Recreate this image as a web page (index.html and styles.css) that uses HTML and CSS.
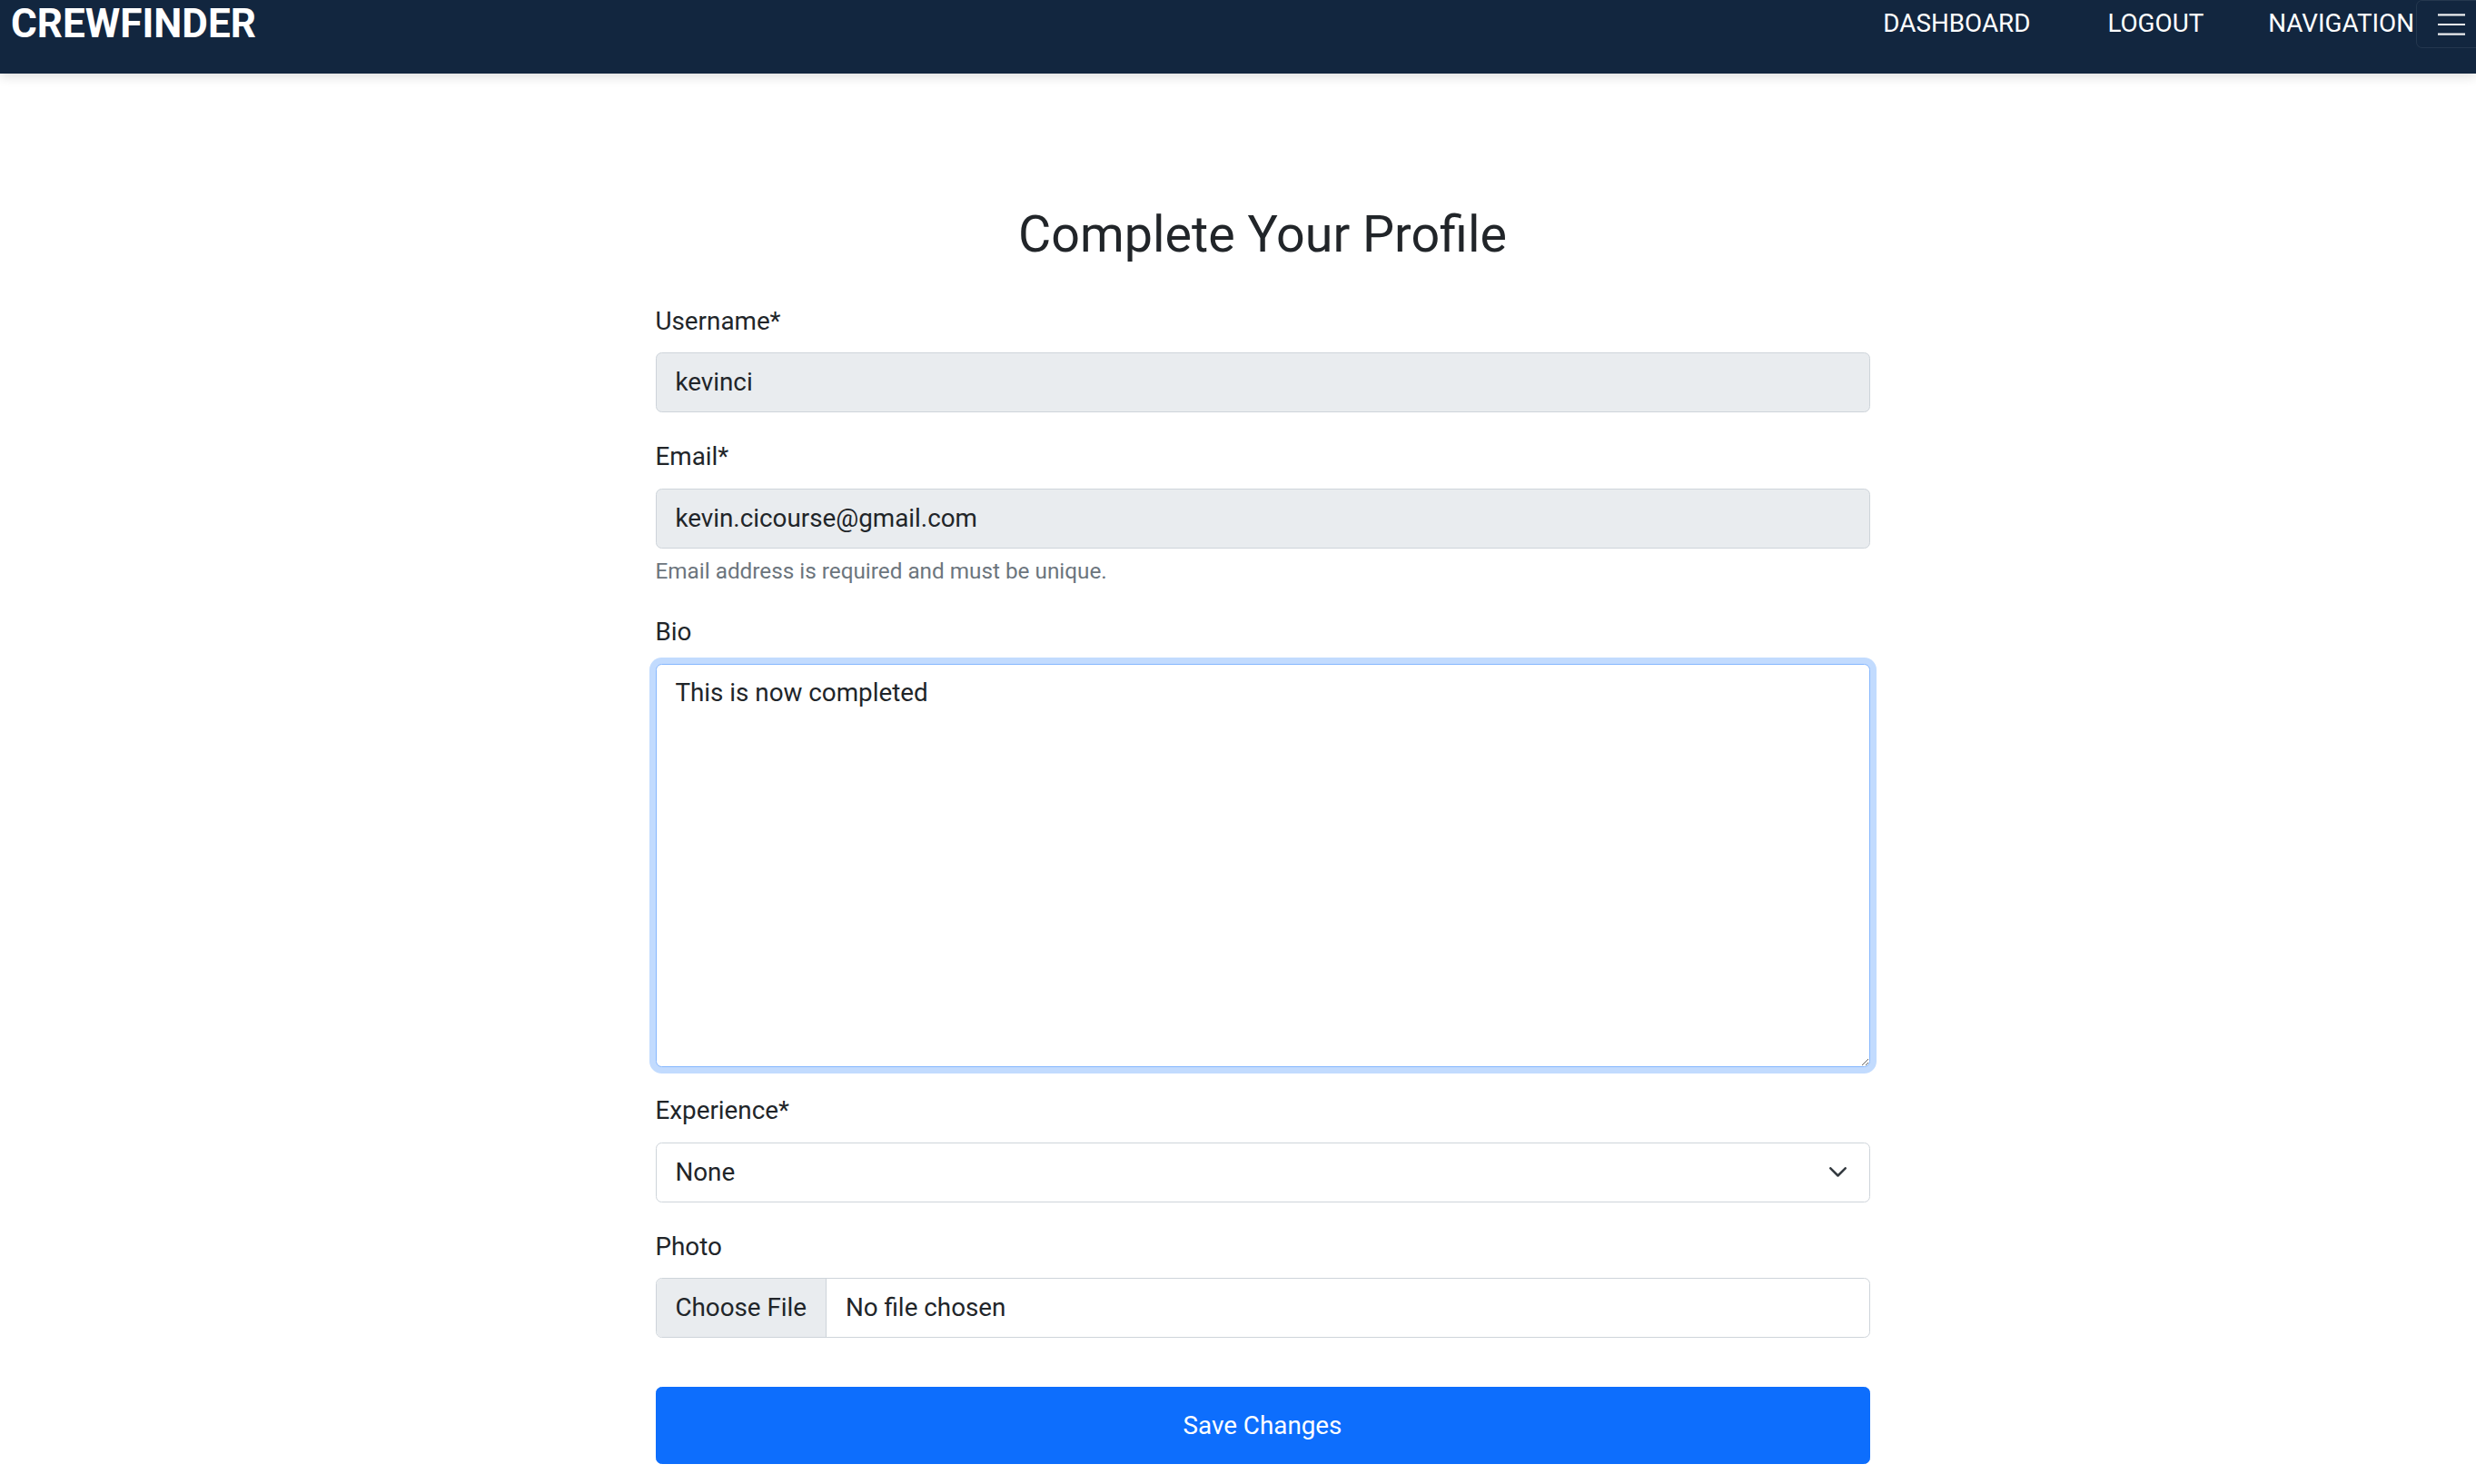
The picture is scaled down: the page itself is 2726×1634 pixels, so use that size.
FILE: index.html
```html
<!DOCTYPE html>
<html lang="en">
<head>
<meta charset="utf-8">
<title>CrewFinder - Complete Your Profile</title>
<link rel="stylesheet" href="styles.css">
</head>
<body>
<header class="navbar">
  <a class="brand" href="#">CREWFINDER</a>
  <nav class="nav-links">
    <a class="nav-link nav-dashboard" href="#">DASHBOARD</a>
    <a class="nav-link nav-logout" href="#">LOGOUT</a>
    <a class="nav-link" href="#">NAVIGATION</a>
  </nav>
  <button class="toggler" type="button" aria-label="Toggle navigation">
    <svg class="toggler-icon" width="30" height="24" viewBox="0 0 30 24" aria-hidden="true">
      <path d="M0 1.3h30M0 12h30M0 22.7h30" stroke="rgba(255,255,255,0.92)" stroke-width="2.2" fill="none"/>
    </svg>
  </button>
</header>

<main class="page">
  <form class="profile-form">
    <h2 class="title">Complete Your Profile</h2>

    <div class="field">
      <label class="label">Username*</label>
      <div class="control control-readonly">kevinci</div>
    </div>

    <div class="field">
      <label class="label">Email*</label>
      <div class="control control-readonly">kevin.cicourse@gmail.com</div>
      <div class="help">Email address is required and must be unique.</div>
    </div>

    <div class="field">
      <label class="label">Bio</label>
      <textarea class="control-textarea" rows="10">This is now completed</textarea>
    </div>

    <div class="field">
      <label class="label">Experience*</label>
      <div class="control control-select">
        <span>None</span>
        <svg class="chevron" width="19" height="11" viewBox="0 0 19 11" aria-hidden="true">
          <path d="M1.3 1.3l8.2 8.2 8.2-8.2" fill="none" stroke="#343a40" stroke-width="2.5" stroke-linecap="round" stroke-linejoin="round"/>
        </svg>
      </div>
    </div>

    <div class="field">
      <label class="label">Photo</label>
      <div class="control control-file">
        <span class="file-button">Choose File</span>
        <span class="file-name">No file chosen</span>
      </div>
    </div>

    <button class="save-btn" type="button">Save Changes</button>
  </form>
</main>
</body>
</html>
```

FILE: styles.css
```css
* {
  box-sizing: border-box;
}

html, body {
  margin: 0;
  padding: 0;
}

body {
  font-family: Roboto, "Liberation Sans", Arial, sans-serif;
  font-size: 27.8px;
  line-height: 1.5;
  color: #212529;
  background: #ffffff;
  overflow: hidden;
}

/* ---------- Navbar ---------- */
.navbar {
  display: flex;
  align-items: flex-start;
  height: 81px;
  background: #12263f;
  box-shadow: 0 3px 12px rgba(0, 0, 0, 0.14);
  overflow: hidden;
  position: relative;
  z-index: 2;
}

.brand {
  padding-left: 12px;
  font-size: 44px;
  font-weight: 700;
  line-height: 52px;
  color: #ffffff;
  text-decoration: none;
}

.nav-links {
  display: flex;
  margin-left: auto;
}

.nav-link {
  font-size: 27.8px;
  line-height: 52px;
  color: #ffffff;
  text-decoration: none;
}

.nav-dashboard {
  margin-right: 85px;
}

.nav-logout {
  margin-right: 71px;
}

.toggler {
  flex-shrink: 0;
  width: 82px;
  height: 53px;
  margin-left: 2px;
  margin-right: -16px;
  padding: 0 0 0 23.3px;
  display: flex;
  align-items: center;
  background: transparent;
  border: 1.7px solid rgba(255, 255, 255, 0.08);
  border-radius: 6.5px;
}

.toggler-icon {
  display: block;
}

/* ---------- Page ---------- */
.page {
  display: flex;
  justify-content: center;
  padding: 144px 0 40px 54px;
}

.profile-form {
  width: 1337px;
}

.title {
  margin: 0 0 41px;
  font-size: 55.6px;
  font-weight: 400;
  line-height: 1.2;
  text-align: center;
  color: #212529;
}

.field {
  margin-bottom: 27.8px;
}

.label {
  display: block;
  margin-bottom: 13.9px;
  line-height: 41.7px;
}

.control {
  display: flex;
  align-items: center;
  height: 66px;
  padding: 0 20.9px;
  border: 1.74px solid #ced4da;
  border-radius: 6.5px;
  background: #ffffff;
  line-height: 41.7px;
}

.control-readonly {
  background: #e9ecef;
}

.help {
  margin-top: 7px;
  font-size: 24.3px;
  line-height: 1.5;
  color: #6c757d;
}

.control-textarea {
  display: block;
  width: 100%;
  height: 444px;
  padding: 10.4px 20.9px;
  font-family: inherit;
  font-size: 27.8px;
  line-height: 1.5;
  color: #212529;
  background: #ffffff;
  border: 1.74px solid #86b7fe;
  border-radius: 6.5px;
  box-shadow: 0 0 0 7px rgba(13, 110, 253, 0.25);
  outline: none;
  resize: vertical;
}

.control-select {
  justify-content: space-between;
  padding-right: 24.5px;
}

.chevron {
  display: block;
}

.control-file {
  padding: 0;
  overflow: hidden;
}

.file-button {
  display: flex;
  align-items: center;
  height: 100%;
  padding: 0 20.9px;
  background: #e9ecef;
  border-right: 1.74px solid #ced4da;
}

.file-name {
  margin-left: 20.9px;
}

.save-btn {
  display: block;
  width: 100%;
  margin-top: 54px;
  padding: 20.5px 20.9px;
  font-family: inherit;
  font-size: 27.8px;
  line-height: 41.7px;
  color: #ffffff;
  background: #0d6efd;
  border: 1.74px solid #0d6efd;
  border-radius: 6.5px;
}

.profile-form .field:last-of-type {
  margin-bottom: 0;
}
```
